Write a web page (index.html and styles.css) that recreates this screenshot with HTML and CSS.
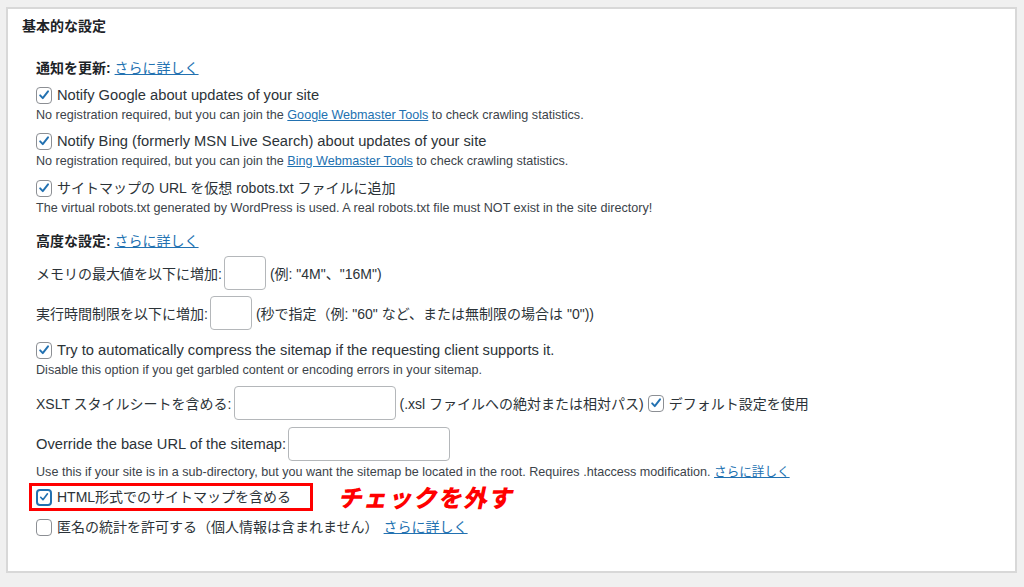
FILE: index.html
```html
<!DOCTYPE html>
<html lang="ja">
<head>
    <meta charset="UTF-8">
    <title>基本的な設定</title>
    <link rel="stylesheet" href="styles.css">
</head>
<body>
    <div class="panel">
        <h2 class="panel-title">基本的な設定</h2>
        <div class="panel-body">

            <div class="section-label"><b>通知を更新:</b> <a href="#">さらに詳しく</a></div>

            <div class="option">
                <label class="check-line en"><span class="cb on"><svg viewBox="0 0 16 16"><path d="M3.6 8.4 L6.6 11.6 L12.6 3.8"/></svg></span>Notify Google about updates of your site</label>
                <div class="desc">No registration required, but you can join the <a href="#">Google Webmaster Tools</a> to check crawling statistics.</div>
            </div>

            <div class="option roomy">
                <label class="check-line en"><span class="cb on"><svg viewBox="0 0 16 16"><path d="M3.6 8.4 L6.6 11.6 L12.6 3.8"/></svg></span>Notify Bing (formerly MSN Live Search) about updates of your site</label>
                <div class="desc">No registration required, but you can join the <a href="#">Bing Webmaster Tools</a> to check crawling statistics.</div>
            </div>

            <div class="option">
                <label class="check-line"><span class="cb on"><svg viewBox="0 0 16 16"><path d="M3.6 8.4 L6.6 11.6 L12.6 3.8"/></svg></span>サイトマップの URL を仮想 robots.txt ファイルに追加</label>
                <div class="desc">The virtual robots.txt generated by WordPress is used. A real robots.txt file must NOT exist in the site directory!</div>
            </div>

            <div class="section-label advanced"><b>高度な設定:</b> <a href="#">さらに詳しく</a></div>

            <div class="field-row">
                <span>メモリの最大値を以下に増加:</span>
                <input type="text" class="input small">
                <span>(例: "4M"、"16M")</span>
            </div>

            <div class="field-row">
                <span>実行時間制限を以下に増加:</span>
                <input type="text" class="input small">
                <span>(秒で指定（例: "60" など、または無制限の場合は "0"))</span>
            </div>

            <div class="option compress">
                <label class="check-line en"><span class="cb on"><svg viewBox="0 0 16 16"><path d="M3.6 8.4 L6.6 11.6 L12.6 3.8"/></svg></span>Try to automatically compress the sitemap if the requesting client supports it.</label>
                <div class="desc">Disable this option if you get garbled content or encoding errors in your sitemap.</div>
            </div>

            <div class="field-row roomy">
                <span>XSLT スタイルシートを含める:</span>
                <input type="text" class="input wide">
                <span>(.xsl ファイルへの絶対または相対パス)</span>
                <label class="check-inline"><span class="cb on"><svg viewBox="0 0 16 16"><path d="M3.6 8.4 L6.6 11.6 L12.6 3.8"/></svg></span>デフォルト設定を使用</label>
            </div>

            <div class="field-row">
                <span class="en">Override the base URL of the sitemap:</span>
                <input type="text" class="input wide">
            </div>
            <div class="desc url-desc">Use this if your site is in a sub-directory, but you want the sitemap be located in the root. Requires .htaccess modification. <a href="#">さらに詳しく</a></div>

            <div class="highlight-row">
                <label class="check-line marked"><span class="cb on focus"><svg viewBox="0 0 16 16"><path d="M3.6 8.4 L6.6 11.6 L12.6 3.8"/></svg></span>HTML形式でのサイトマップを含める</label>
                <span class="note">チェックを外す</span>
            </div>

            <label class="check-line last"><span class="cb"></span>匿名の統計を許可する（個人情報は含まれません） <a href="#" class="after-link">さらに詳しく</a></label>

        </div>
    </div>
</body>
</html>
```

FILE: styles.css
```css
body {
    margin: 0;
    padding: 7px 7px 11px 6px;
    background: #f0f0f0;
    font-family: 'Liberation Sans', 'Noto Sans CJK JP', sans-serif;
    color: #2c3338;
}

.panel {
    background: #fff;
    border: 2px solid #d8d8d8;
    height: 566px;
    box-sizing: border-box;
}

.panel-title {
    margin: 0;
    padding: 7px 0 0 14px;
    font-size: 14px;
    line-height: 20px;
    font-weight: bold;
    color: #1d2327;
}

.panel-body {
    padding: 22px 0 0 28px;
    font-size: 14px;
}

a {
    color: #2271b1;
    text-decoration: underline;
}

.section-label {
    line-height: 20px;
    margin-bottom: 6px;
}

.section-label b {
    color: #1d2327;
}

.section-label.advanced {
    margin-top: 14px;
    margin-bottom: 5px;
}

.option {
    margin-bottom: 6px;
}

.option.roomy {
    margin-bottom: 7px;
}

.check-line {
    display: flex;
    align-items: center;
    height: 22px;
    line-height: 22px;
}

.en {
    font-size: 14.7px;
}

.cb {
    width: 16px;
    height: 17px;
    border: 1px solid #8c8f94;
    border-radius: 4px;
    box-sizing: border-box;
    margin-right: 5px;
    flex-shrink: 0;
    display: flex;
    align-items: center;
    justify-content: center;
    background: #fff;
}

.cb svg {
    width: 14px;
    height: 14px;
    fill: none;
    stroke: #2271b1;
    stroke-width: 2.2;
    stroke-linecap: round;
    stroke-linejoin: round;
}

.cb.focus {
    border: 2px solid #2271b1;
}

.desc {
    font-size: 12.6px;
    line-height: 18px;
    color: #3c434a;
}

.field-row {
    display: flex;
    align-items: center;
    height: 34px;
    margin-bottom: 6px;
    color: #2c3338;
}

.field-row.roomy {
    margin-bottom: 7px;
}

.input {
    height: 34px;
    box-sizing: border-box;
    border: 1px solid #b4b7ba;
    border-radius: 4px;
    margin: 0 4px 0 2px;
    background: #fff;
}

.input.small {
    width: 42px;
}

.input.wide {
    width: 162px;
}

.check-inline {
    display: flex;
    align-items: center;
    margin-left: 4px;
}

.compress {
    margin-top: 9px;
    margin-bottom: 7px;
}

.url-desc {
    margin-top: -4px;
    margin-bottom: 2px;
}

.highlight-row {
    display: flex;
    align-items: center;
    margin-left: -7px;
}

.marked {
    border: 3px solid #f00;
    height: 28px;
    width: 284px;
    box-sizing: border-box;
    padding-left: 4px;
}

.note {
    margin-left: 27px;
    color: #f00;
    font-family: 'Noto Sans CJK JP', sans-serif;
    font-weight: 900;
    font-size: 24px;
    line-height: 28px;
    transform: skewX(-12deg);
    letter-spacing: 1px;
}

.last {
    margin-top: 5px;
}

.after-link {
    margin-left: 5px;
}
```
